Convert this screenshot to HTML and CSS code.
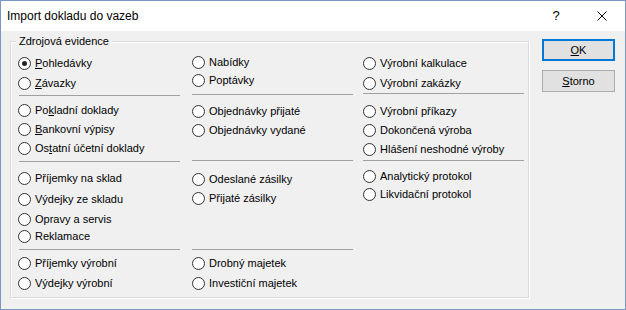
FILE: index.html
```html
<!DOCTYPE html>
<html lang="cs">
<head>
<meta charset="utf-8">
<title>Import dokladu do vazeb</title>
<link rel="stylesheet" href="styles.css">
</head>
<body>
<div class="window">
  <div class="titlebar">
    <span class="title">Import dokladu do vazeb</span>
    <div class="tb-btn help">?</div>
    <div class="tb-btn close">
      <svg width="10" height="10" viewBox="0 0 10 10"><path d="M0.5 0.5 L9.5 9.5 M9.5 0.5 L0.5 9.5" stroke="#000" stroke-width="1" fill="none"/></svg>
    </div>
  </div>
  <div class="client">
    <div class="group">
      <div class="legend">Zdrojová evidence</div>
      <div class="cols">
        <div class="col">
          <div class="opt mt3"><span class="radio checked"></span><span><u>P</u>ohledávky</span></div>
          <div class="opt mt4"><span class="radio"></span><span><u>Z</u>ávazky</span></div>
          <div class="sep first mt4"></div>
          <div class="opt mt6"><span class="radio"></span><span>Po<u>k</u>ladní doklady</span></div>
          <div class="opt mt3"><span class="radio"></span><span><u>B</u>ankovní výpisy</span></div>
          <div class="opt mt3"><span class="radio"></span><span>Os<u>t</u>atní účetní doklady</span></div>
          <div class="sep first mt5"></div>
          <div class="opt mt8"><span class="radio"></span><span>Příjemky na sklad</span></div>
          <div class="opt mt5"><span class="radio"></span><span>Výdejky ze skladu</span></div>
          <div class="opt mt4"><span class="radio"></span><span>Opravy a servis</span></div>
          <div class="opt mt1"><span class="radio"></span><span>Reklamace</span></div>
          <div class="sep first mt5"></div>
          <div class="opt mt5"><span class="radio"></span><span>Příjemky výrobní</span></div>
          <div class="opt mt4"><span class="radio"></span><span>Výdejky výrobní</span></div>
        </div>
        <div class="col">
          <div class="opt mt2"><span class="radio"></span><span>Nabídky</span></div>
          <div class="opt mt2"><span class="radio"></span><span>Poptávky</span></div>
          <div class="sep mt6"></div>
          <div class="opt mt8"><span class="radio"></span><span>Objednávky přijaté</span></div>
          <div class="opt mt3"><span class="radio"></span><span>Objednávky vydané</span></div>
          <div class="sep mt22"></div>
          <div class="opt mt10"><span class="radio"></span><span>Odeslané zásilky</span></div>
          <div class="opt mt3"><span class="radio"></span><span>Přijaté zásilky</span></div>
          <div class="sep mt43"></div>
          <div class="opt mt5"><span class="radio"></span><span>Drobný majetek</span></div>
          <div class="opt mt4"><span class="radio"></span><span>Investiční majetek</span></div>
        </div>
        <div class="col">
          <div class="opt mt3"><span class="radio"></span><span>Výrobní kalkulace</span></div>
          <div class="opt mt4"><span class="radio"></span><span>Výrobní zakázky</span></div>
          <div class="sep mt2"></div>
          <div class="opt mt9"><span class="radio"></span><span>Výrobní příkazy</span></div>
          <div class="opt mt3"><span class="radio"></span><span>Dokončená výroba</span></div>
          <div class="opt mt3"><span class="radio"></span><span>Hlášení neshodné výroby</span></div>
          <div class="sep mt3"></div>
          <div class="opt mt7"><span class="radio"></span><span>Analytický protokol</span></div>
          <div class="opt mt2"><span class="radio"></span><span>Likvidační protokol</span></div>
        </div>
      </div>
    </div>
    <div class="buttons">
      <div class="btn default"><span><u>O</u>K</span></div>
      <div class="btn"><span><u>S</u>torno</span></div>
    </div>
  </div>
</div>
</body>
</html>
```

FILE: styles.css
```css
* { box-sizing: border-box; }
html, body { margin: 0; padding: 0; background: #f0f0f0; }
body {
  font-family: "Liberation Sans", Arial, sans-serif;
  font-size: 11px;
  color: #000;
}
.window {
  width: 626px;
  height: 310px;
  border: 1px solid #7a99c2;
  background: #f0f0f0;
  display: flex;
  flex-direction: column;
}
.titlebar {
  height: 30px;
  background: #fff;
  display: flex;
  align-items: center;
  flex-shrink: 0;
}
.title {
  flex: 1;
  padding-left: 6px;
  font-size: 12px;
}
.tb-btn {
  width: 46px;
  height: 30px;
  display: flex;
  align-items: center;
  justify-content: center;
  font-size: 13px;
}
.tb-btn.help { padding-bottom: 2px; }
.tb-btn svg { display: block; }

.client {
  display: flex;
  padding: 10px 0 0 9px;
}
.group {
  width: 519px;
  height: 257px;
  border: 1px solid #dcdcdc;
  box-shadow: inset 1px 1px 0 #fff, 1px 1px 0 #fff;
}
.legend {
  width: max-content;
  margin: -7px 0 0 5px;
  padding: 0 3px;
  line-height: 13px;
  height: 13px;
  background: #f0f0f0;
}
.cols {
  display: grid;
  grid-template-columns: 174px 171px 1fr;
  margin-top: 4px;
  padding-left: 7px;
}
.col {
  display: flex;
  flex-direction: column;
}
.opt {
  display: flex;
  align-items: center;
  height: 16px;
  line-height: 16px;
  white-space: nowrap;
}
.radio {
  width: 13px;
  height: 13px;
  border: 1px solid #333;
  border-radius: 50%;
  background: #fff;
  margin-right: 4px;
  flex-shrink: 0;
  display: flex;
  align-items: center;
  justify-content: center;
}
.radio.checked::after {
  content: "";
  width: 5px;
  height: 5px;
  border-radius: 50%;
  background: #222;
}
.sep {
  width: 161px;
  height: 1px;
  background: #a0a0a0;
}
.sep.first { margin-left: 1px; }

.mt1 { margin-top: 1px; }
.mt2 { margin-top: 2px; }
.mt3 { margin-top: 3px; }
.mt4 { margin-top: 4px; }
.mt5 { margin-top: 5px; }
.mt6 { margin-top: 6px; }
.mt7 { margin-top: 7px; }
.mt8 { margin-top: 8px; }
.mt9 { margin-top: 9px; }
.mt10 { margin-top: 10px; }
.mt22 { margin-top: 22px; }
.mt43 { margin-top: 43px; }

.buttons {
  margin: -2px 0 0 13px;
  display: flex;
  flex-direction: column;
  gap: 9px;
}
.btn {
  width: 73px;
  height: 22px;
  background: #e1e1e1;
  border: 1px solid #adadad;
  display: flex;
  align-items: center;
  justify-content: center;
}
.btn.default {
  border-color: #0078d7;
  box-shadow: inset 0 0 0 1px #0078d7;
}
```
